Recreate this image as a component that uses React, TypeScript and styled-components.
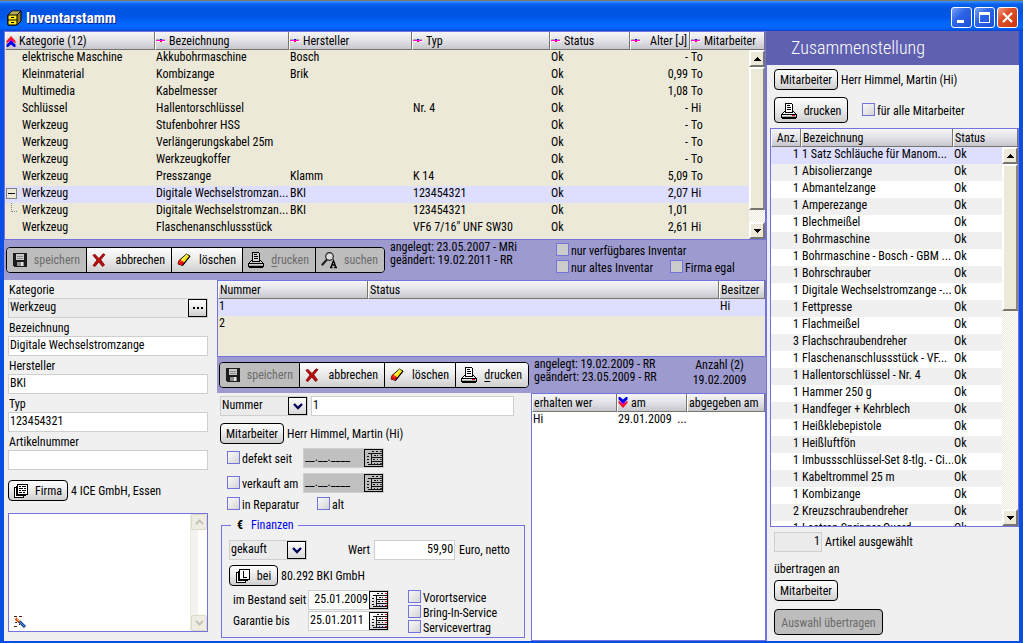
import React from 'react';
import styled, { createGlobalStyle, css } from 'styled-components';

const violet = '#7373e0';
const beige = '#ece9d8';
const selected = '#dedeff';
const bandColor = '#9c9ace';
const panel = '#f0f0f0';

const GlobalStyle = createGlobalStyle`
  *, *::before, *::after { box-sizing: border-box; }
  body { margin: 0; background: ${panel}; }
  body, button, input, select, textarea, table {
    font-family: "Roboto Condensed", "Liberation Sans", sans-serif;
    font-size: 12px;
    line-height: 16px;
    color: #000;
  }
`;

/* ---------- window ---------- */

const Window = styled.div`
  display: flex;
  flex-direction: column;
  min-height: 100vh;
  border-top: 1px solid #7d7a68;
  background: #0a4ee4;
`;

const TitleBar = styled.header`
  display: flex;
  align-items: center;
  gap: 4px;
  height: 30px;
  padding: 3px 5px 0 7px;
  background: linear-gradient(#3a95ff 0, #0a62ee 3px, #0054e0 8px, #0056e6 16px, #0066fd 22px, #0066ff 27px, #0347d0 30px);
`;

const Title = styled.h1`
  flex: 1;
  margin: 0;
  font-size: 15px;
  line-height: 20px;
  font-weight: 700;
  color: #fff;
  text-shadow: 1px 1px 0 #0a1e8a;
`;

const CaptionButtons = styled.div`
  display: flex;
  gap: 2px;
`;

const CaptionButton = styled.button<{ $close?: boolean }>`
  display: grid;
  place-items: center;
  width: 21px;
  height: 21px;
  padding: 0;
  border: 1px solid #fff;
  border-radius: 3px;
  background: ${p => (p.$close
    ? 'linear-gradient(135deg, #f0a088 0, #e0522c 35%, #c8350e 100%)'
    : 'linear-gradient(135deg, #7ca4f8 0, #2f66e8 40%, #1b4fd8 100%)')};
`;

const Content = styled.div`
  display: flex;
  flex: 1;
  margin: 0 4px 2px;
  background: ${panel};
`;

const MainColumn = styled.main`
  display: flex;
  flex: 1;
  flex-direction: column;
  min-width: 0;
`;

/* ---------- tables ---------- */

const TableFrame = styled.div<{ $fill?: string; $height?: number }>`
  position: relative;
  border: 1px solid ${violet};
  background: ${p => p.$fill || beige};
  ${p => p.$height && css`min-height: ${p.$height}px;`}
`;

const DataTable = styled.table`
  width: 100%;
  table-layout: fixed;
  border-spacing: 0;
`;

const Col = styled.col<{ $width?: number }>`
  ${p => p.$width && css`width: ${p.$width}px;`}
`;

const Th = styled.th<{ $right?: boolean; $icon?: boolean }>`
  height: 18px;
  padding: 1px 2px 0 ${p => (p.$icon ? 0 : 1)}px;
  overflow: hidden;
  border-right: 1px solid #77756c;
  border-bottom: 1px solid #77756c;
  border-left: 1px solid #fff;
  background: linear-gradient(#f6f6f8, #e2e2e6 50%, #c6c6ce);
  font-weight: 400;
  line-height: 16px;
  text-align: ${p => (p.$right ? 'right' : 'left')};
  white-space: nowrap;
`;

const HeadLabel = styled.span<{ $spread?: boolean }>`
  display: flex;
  align-items: center;
  justify-content: ${p => (p.$spread ? 'space-between' : 'flex-start')};
  gap: 3px;
`;

const Td = styled.td<{ $right?: boolean }>`
  height: 17px;
  padding: 0 ${p => (p.$right ? 2 : 0)}px 2px 1px;
  overflow: hidden;
  line-height: 15px;
  text-align: ${p => (p.$right ? 'right' : 'left')};
  white-space: nowrap;
`;

const TreeTd = styled(Td)`
  padding: 0;
`;

const TreeLine = styled.span`
  display: flex;
  align-items: flex-start;
  height: 17px;
`;

const TreeSlot = styled.span`
  display: block;
  width: 17px;
  height: 16px;
`;

const Tr = styled.tr<{ $fill?: string }>`
  background: ${p => p.$fill || 'transparent'};
`;

/* ---------- scroll bars ---------- */

const ScrollTrack = styled.div<{ $top: number }>`
  position: absolute;
  top: ${p => p.$top}px;
  right: 0;
  bottom: 0;
  display: flex;
  flex-direction: column;
  width: 16px;
  background: repeating-conic-gradient(#fff 0 25%, #ece9d8 0 50%) 0 0 / 2px 2px;
`;

const ScrollButton = styled.button`
  display: grid;
  place-items: center;
  flex: none;
  height: 17px;
  padding: 0;
  border: 2px solid;
  border-color: #fff #77756c #77756c #fff;
  background: ${beige};
`;

const ScrollThumb = styled.div<{ $height: string }>`
  flex: none;
  height: ${p => p.$height};
  border: 2px solid;
  border-color: #fff #8a877a #77756c #fff;
  background: ${beige};
`;

const Spacer = styled.div`
  flex: 1;
`;

/* ---------- controls ---------- */

const buttonFace = css`
  background: linear-gradient(#fdfdfd, #ececec 45%, #cfcfcf);
  &:disabled { background: #bdbdbd; color: #6c6c6c; }
`;

const PushButton = styled.button<{ $width: number; $tall?: boolean }>`
  display: inline-flex;
  align-items: center;
  justify-content: center;
  gap: 7px;
  flex: none;
  width: ${p => p.$width}px;
  height: ${p => (p.$tall ? 26 : 21)}px;
  padding: 1px 0 0;
  border: 1px solid #000;
  border-radius: 4px;
  white-space: nowrap;
  ${buttonFace}
`;

const ButtonBar = styled.div`
  display: flex;
  flex: none;
  height: 26px;
  border: 1px solid #000;
  border-radius: 4px;
  overflow: hidden;
`;

const BarButton = styled.button<{ $width: number }>`
  display: flex;
  align-items: center;
  justify-content: space-between;
  width: ${p => p.$width}px;
  padding: 0 6px 0 5px;
  border: 0;
  border-left: 1px solid #000;
  white-space: nowrap;
  ${buttonFace}
  &:first-child { padding-left: 6px; border-left: 0; }
`;

const Key = styled.u`
  text-underline-offset: 2px;
`;

const Band = styled.section<{ $height: number }>`
  display: flex;
  flex: none;
  gap: 5px;
  height: ${p => p.$height}px;
  background: ${bandColor};
`;

const BandBar = styled.div<{ $top: number }>`
  padding: ${p => p.$top}px 0 0 2px;
`;

const Stamp = styled.p<{ $width: number }>`
  width: ${p => p.$width}px;
  margin: 0;
  padding-top: 1px;
  line-height: 13px;
  white-space: nowrap;
`;

const Counter = styled.p`
  flex: 1;
  margin: 0;
  padding: 1px 0 0 8px;
  line-height: 15px;
  text-align: center;
`;

const FilterGroup = styled.div`
  display: grid;
  grid-template-columns: 114px auto;
  align-content: start;
  row-gap: 3px;
  padding-top: 3px;
`;

const WideCell = styled.div`
  grid-column: 1 / -1;
`;

const CheckLabel = styled.label`
  display: flex;
  align-items: flex-start;
  gap: 2px;
  height: 14px;
  white-space: nowrap;
`;

const CheckBox = styled.input<{ $flat?: boolean }>`
  flex: none;
  appearance: none;
  width: 13px;
  height: 13px;
  margin: 0;
  border: 1px solid ${violet};
  background: ${p => (p.$flat ? '#cbcbcb' : 'linear-gradient(135deg, #fafafa, #d4d4d4)')};
`;

const TextField = styled.input<{ $width?: number; $gray?: boolean; $right?: boolean }>`
  width: ${p => (p.$width ? `${p.$width}px` : '100%')};
  height: 20px;
  padding: 0 1px 2px;
  border: 1px solid #cfcfcf;
  border-radius: 0;
  outline: 0;
  background: ${p => (p.$gray ? '#ebebeb' : '#fff')};
  text-align: ${p => (p.$right ? 'right' : 'left')};
`;

const Joined = styled.div<{ $fill: string; $width?: number }>`
  display: flex;
  flex: none;
  width: ${p => (p.$width ? `${p.$width}px` : '100%')};
  height: 20px;
  border: 1px solid #cfcfcf;
  background: ${p => p.$fill};
`;

const JoinedInput = styled.input<{ $right?: boolean }>`
  flex: 1;
  min-width: 0;
  padding: 0 1px 2px;
  border: 0;
  outline: 0;
  background: transparent;
  text-align: ${p => (p.$right ? 'right' : 'left')};
`;

const JoinedButton = styled.button`
  display: grid;
  place-items: center;
  flex: none;
  width: 19px;
  height: 18px;
  padding: 0;
  border: 1px solid #000;
  ${buttonFace}
`;

const SelectBox = styled.div<{ $width: number }>`
  position: relative;
  flex: none;
  width: ${p => p.$width}px;
  height: 20px;
`;

const Select = styled.select`
  appearance: none;
  width: 100%;
  height: 20px;
  padding: 0 20px 2px 1px;
  border: 1px solid #cfcfcf;
  border-radius: 0;
  background: #ebebeb;
`;

const SelectArrow = styled.span`
  position: absolute;
  top: 1px;
  right: 1px;
  display: grid;
  place-items: center;
  width: 19px;
  height: 18px;
  border: 1px solid #000;
  background: linear-gradient(#fdfdfd, #d8d8d8);
  pointer-events: none;
`;

/* ---------- lower area ---------- */

const Lower = styled.div`
  display: flex;
  flex: 1;
`;

const ArticleForm = styled.form`
  display: flex;
  flex: none;
  flex-direction: column;
  width: 213px;
  padding: 0 9px 9px 4px;
`;

const FieldLabel = styled.label`
  height: 18px;
  padding-left: 1px;
  line-height: 20px;
`;

const Line = styled.div<{ $gap?: number; $top?: number; $left?: number }>`
  display: flex;
  align-items: center;
  gap: ${p => p.$gap ?? 3}px;
  margin-top: ${p => p.$top ?? 0}px;
  padding-left: ${p => p.$left ?? 0}px;
  white-space: nowrap;
`;

const NoteBox = styled.div`
  position: relative;
  display: flex;
  flex: 1;
  min-height: 118px;
  margin-top: 12px;
  border: 1px solid ${violet};
  background: #fff;
`;

const Note = styled.textarea`
  flex: 1;
  min-width: 0;
  padding: 2px;
  border: 0;
  outline: 0;
  resize: none;
  background: transparent;
`;

const NoteMark = styled.span`
  position: absolute;
  left: 5px;
  bottom: 3px;
  width: 12px;
  height: 12px;
`;

const PaleScroll = styled.div`
  display: flex;
  flex-direction: column;
  justify-content: space-between;
  width: 17px;
  border-left: 1px solid #ecebe4;
  background: linear-gradient(90deg, #f3f2ee 0 6px, #fff 8px);
`;

const PaleButton = styled.button`
  display: grid;
  place-items: center;
  height: 16px;
  padding: 0;
  border: 1px solid #dddac8;
  border-radius: 2px;
  background: #efede1;
`;

const ItemColumn = styled.div`
  display: flex;
  flex: 1;
  flex-direction: column;
  min-width: 0;
`;

const ItemDetails = styled.div`
  display: flex;
  flex: 1;
`;

const ItemForm = styled.form`
  flex: none;
  width: 314px;
  padding: 3px 6px 3px 3px;
`;

const CheckSlot = styled.div<{ $width: number }>`
  width: ${p => p.$width}px;
`;

const Finance = styled.fieldset`
  min-width: 0;
  margin: 6px 0 0 1px;
  padding: 7px 0 3px 7px;
  border: 1px solid ${violet};
`;

const Legend = styled.legend`
  margin-left: 2px;
  padding: 0 4px 0 6px;
  color: #0000f0;
`;

const Euro = styled.b`
  margin-right: 8px;
  color: #000;
`;

const ServiceGrid = styled.div`
  display: flex;
  align-items: flex-start;
  gap: 19px;
  margin-top: 4px;
`;

const DateList = styled.div`
  display: grid;
  grid-template-columns: 75px 81px;
  align-items: center;
  gap: 1px 0;
  padding-left: 4px;
  white-space: nowrap;
`;

const ServiceList = styled.div`
  display: flex;
  flex-direction: column;
  gap: 1px;
`;

const HistoryArea = styled.div`
  display: flex;
  flex: 1;
  min-width: 0;
`;

const HistoryFrame = styled(TableFrame)`
  flex: 1;
  min-width: 0;
`;

/* ---------- right panel ---------- */

const Side = styled.aside`
  display: flex;
  flex: none;
  flex-direction: column;
  width: 253px;
`;

const SideTitle = styled.h2`
  height: 34px;
  margin: 0;
  padding-left: 25px;
  background: #6060b0;
  color: #fff;
  font-size: 18px;
  font-weight: 300;
  line-height: 34px;
`;

const SideBody = styled.div`
  display: flex;
  flex: 1;
  flex-direction: column;
  padding: 4px 0 6px 3px;
  border-left: 1px solid ${violet};
`;

const SideRow = styled.div<{ $top?: number; $gap?: number }>`
  display: flex;
  align-items: center;
  gap: ${p => p.$gap ?? 3}px;
  margin-top: ${p => p.$top ?? 0}px;
  padding-left: 4px;
  white-space: nowrap;
`;

const ListFrame = styled(TableFrame)`
  flex: 1 1 0;
  margin-top: 5px;
  overflow: hidden;
`;

/* ---------- icons ---------- */

const CabinetIcon = () => (
  <svg width="15" height="16" viewBox="0 0 15 16" aria-hidden="true">
    <path d="M1 5 5 1h9v10l-4 4H1z" fill="#8a7d20" stroke="#000" />
    <path d="M5 1.500h8.500L10 5H1.500z" fill="#b9ad5a" />
    <path d="M1 5h9v10H1z" fill="#ffe81a" stroke="#000" />
    <path d="M1 10h9" stroke="#000" />
    <path d="M4 7.500h3M4 12.500h3" stroke="#000" />
    <path d="M10 5l4-4" stroke="#000" />
  </svg>
);

const SortNone = () => (
  <svg width="10" height="6" viewBox="0 0 10 6" shapeRendering="crispEdges" aria-hidden="true">
    <path d="M0 1h9v1H0z" fill="#b0a8b0" />
    <path d="M0 2h9v1H0z" fill="#ff00e0" />
    <path d="M1 3h9v1H1z" fill="#fff" />
    <path d="M4 1h2v1H4z" fill="#0018e0" />
    <path d="M4 3h2v1H4z" fill="#e80020" />
  </svg>
);

const SortDouble = ({ down }: { down?: boolean }) => (
  <svg width="10" height="12" viewBox="0 0 10 12" aria-hidden="true">
    <g transform={down ? 'rotate(180 5 6)' : undefined}>
      <path d="M5 1 9.500 6v2.500L5 5 .5 8.500V6z" fill="#f01818" />
      <path d="M5 4l3 3H2z" fill="#f000e0" />
      <path d="M5 5.500 9.500 9.500V12H8L5 9.500 2 12H.5V9.500z" fill="#0000e8" />
    </g>
  </svg>
);

const Floppy = () => (
  <svg width="14" height="14" viewBox="0 0 14 14" shapeRendering="crispEdges" aria-hidden="true">
    <path d="M0 0h13l1 1v13H1l-1-1z" fill="#1c1c1c" />
    <path d="M3 1h8v6H3z" fill="#c9c9c9" />
    <path d="M4 3h6v1H4zM4 5h6v1H4z" fill="#8c8c8c" />
    <path d="M4 9h7v4H4z" fill="#8e8e8e" />
    <path d="M8 9h2v4H8z" fill="#e4e4e4" />
  </svg>
);

const Cross = () => (
  <svg width="14" height="14" viewBox="0 0 14 14" aria-hidden="true">
    <path d="M2.500 1 7 5.500 11 .8l2 .8-4.200 5.200L12.500 12l-2 1.500L6.800 9 3 13.500l-2-1L5 7 1 2.500z" fill="#b80d0d" stroke="#7c0404" strokeWidth=".8" />
  </svg>
);

const Eraser = () => (
  <svg width="14" height="14" viewBox="0 0 14 14" aria-hidden="true">
    <path d="M9.500 1 13 3 5.500 12.500 1 11l1-3.500z" fill="#ffe600" stroke="#000" strokeWidth=".9" />
    <path d="M3.500 6 7.500 10 5.500 12.500 1 11l1-3.500z" fill="#e80c0c" />
    <path d="M10 1.500 4 8.500" stroke="#fffbb0" />
    <path d="M13 3 5.500 12.500" stroke="#000" strokeWidth="1.200" />
  </svg>
);

const Printer = ({ gray }: { gray?: boolean }) => (
  <svg width="16" height="16" viewBox="0 0 16 16" shapeRendering="crispEdges" aria-hidden="true">
    <path d="M4 0h7v1h1v8H4z" fill="#000" />
    <path d="M5 1h6v8H5z" fill={gray ? '#d0d0d0' : '#fff'} />
    <path d="M6 2h3v1H6zM6 4h4v1H6zM6 6h4v1H6z" fill="#000" />
    <path d="M3 8h1v1h8V8h1v1h1v1h1v1h1v4h-1v1H1v-1H0v-4h1v-1h1V9h1z" fill="#000" />
    <path d="M3 9h1v1h8V9h1v1h1v1H2v-1h1z" fill={gray ? '#c8c8c8' : '#fff'} />
    <path d="M1 12h14v1H1z" fill={gray ? '#d0d0d0' : '#efefef'} />
    <path d="M1 13h14v1H1z" fill="#a4a4a4" />
    {!gray && <path d="M11 12h3v1h-3z" fill="#f00000" />}
  </svg>
);

const SearchIcon = () => (
  <svg width="16" height="17" viewBox="0 0 16 17" aria-hidden="true">
    <circle cx="8.500" cy="4.500" r="3.800" fill="#dcdcdc" stroke="#222" strokeWidth="1.200" />
    <path d="M6 7.500.8 13.200" stroke="#222" strokeWidth="2.200" />
    <path d="M9 15.500h2.500M13 15.500h3M9.800 15.500 12.500 8.500 15 15.500M10.800 13h3.500" fill="none" stroke="#000" strokeWidth="1.300" />
  </svg>
);

const Calendar = ({ color }: { color?: boolean }) => (
  <svg width="17" height="16" viewBox="0 0 17 16" shapeRendering="crispEdges" aria-hidden="true">
    <path d="M3 3h14v1H3zM6 7h11v1H6zM6 11h11v1H6zM3 14h14v1H3zM6 3h1v12H6zM2 6h2v1H2zM2 9h2v1H2zM2 12h2v1H2z" fill="#111" />
    <path d="M7 1h2v1H7zM11 1h2v1h-2zM9 5h2v1H9zM12 5h1v1h-1zM8 9h2v1H8zM12 9h1v1h-1z" fill="#111" />
    <path d="M15 1h2v1h-2zM15 5h2v1h-2zM15 9h2v1h-2zM15 13h2v1h-2z" fill={color ? '#e00010' : '#333'} />
    <path d="M9 13h1v1H9zM12 13h1v1h-1z" fill={color ? '#1020d0' : '#333'} />
  </svg>
);

const Sheets = ({ letter }: { letter?: boolean }) => (
  <svg width="14" height="14" viewBox="0 0 14 14" shapeRendering="crispEdges" aria-hidden="true">
    <path d="M0 3h10v11H0z" fill="#000" />
    <path d="M1 4h8v9H1z" fill="#fff" />
    <path d="M2 2h10v10H2z" fill="#000" />
    <path d="M3 3h8v8H3z" fill="#fff" />
    <path d="M3 0h11v11H3z" fill="#000" />
    <path d="M4 1h9v9H4z" fill="#fff" />
    {letter
      ? <path d="M7 2h1v6h3v1H7z" fill="#000" />
      : <path d="M5 2h2v1H5zM8 2h4v1H8zM5 4h4v1H5zM10 4h2v1h-2zM5 6h2v1H5zM8 6h4v1H8zM5 8h3v1H5zM9 8h2v1H9z" fill="#000" />}
  </svg>
);

const Chevron = () => (
  <svg width="10" height="8" viewBox="0 0 10 8" aria-hidden="true">
    <path d="M1 2l4 4 4-4" fill="none" stroke="#000058" strokeWidth="2.400" />
  </svg>
);

const Dots = () => (
  <svg width="12" height="2" viewBox="0 0 12 2" shapeRendering="crispEdges" aria-hidden="true">
    <path d="M1 0h2v2H1zM5 0h2v2H5zM9 0h2v2H9z" fill="#000" />
  </svg>
);

const Arrow = ({ down }: { down?: boolean }) => (
  <svg width="7" height="4" viewBox="0 0 7 4" shapeRendering="crispEdges" aria-hidden="true">
    <path d={down ? 'M0 0h7v1H6v1H5v1H4v1H3V3H2V2H1V1H0z' : 'M3 0h1v1h1v1h1v1h1v1H0V3h1V2h1V1h1z'} fill="#000" />
  </svg>
);

const PaleArrow = ({ down }: { down?: boolean }) => (
  <svg width="9" height="6" viewBox="0 0 9 6" aria-hidden="true">
    <path d={down ? 'M1 1l3.500 3.500L8 1' : 'M1 5l3.500-3.500L8 5'} fill="none" stroke="#c4c2b8" strokeWidth="2" />
  </svg>
);

const Minus = () => (
  <svg width="17" height="16" viewBox="0 0 17 16" shapeRendering="crispEdges" aria-hidden="true">
    <path d="M1 2h11v11H1z" fill="#808080" />
    <path d="M2 3h9v9H2z" fill={beige} />
    <path d="M3 7h7v1H3z" fill="#000" />
  </svg>
);

const Branch = () => (
  <svg width="17" height="16" viewBox="0 0 17 16" shapeRendering="crispEdges" aria-hidden="true">
    <path d="M6.500 0v9M7 8.500h6" fill="none" stroke="#808080" strokeDasharray="1 1" />
  </svg>
);

const Pencil = () => (
  <svg width="12" height="12" viewBox="0 0 12 12" aria-hidden="true">
    <path d="M0 .5h3M5 .5h3M0 10.500h3M5 8.500h1M1 6.500h2" stroke="#402010" />
    <path d="M1.500 2.500 6 6.500" stroke="#e0501c" strokeWidth="2.600" />
    <path d="M3 3l3 3" stroke="#f8d030" />
    <path d="M5.500 5.500 11 11" stroke="#143c98" strokeWidth="3" />
    <path d="M6 6l4.500 4.500" stroke="#38b0d8" />
  </svg>
);

/* ---------- composite controls ---------- */

const ScrollBar = ({ top, thumb }: { top: number; thumb: string }) => (
  <ScrollTrack $top={top}>
    <ScrollButton type="button" aria-label="nach oben"><Arrow /></ScrollButton>
    <ScrollThumb $height={thumb} />
    <Spacer />
    <ScrollButton type="button" aria-label="nach unten"><Arrow down /></ScrollButton>
  </ScrollTrack>
);

const Check = ({ label, flat }: { label: string; flat?: boolean }) => (
  <CheckLabel><CheckBox type="checkbox" $flat={flat} />{label}</CheckLabel>
);

const DateField = ({ id, label, value, gray, right }: { id: string; label?: string; value: string; gray?: boolean; right?: boolean }) => (
  <Joined $fill={gray ? '#c0c0c0' : '#fff'} $width={81}>
    <JoinedInput id={id} aria-label={label} defaultValue={value} $right={right} />
    <JoinedButton type="button" aria-label="Kalender" disabled={gray}><Calendar color={!gray} /></JoinedButton>
  </Joined>
);

const DropDown = ({ label, value, width }: { label: string; value: string; width: number }) => (
  <SelectBox $width={width}>
    <Select aria-label={label}><option>{value}</option></Select>
    <SelectArrow><Chevron /></SelectArrow>
  </SelectBox>
);

/* ---------- data ---------- */

const inventory = [
  ['elektrische Maschine', 'Akkubohrmaschine', 'Bosch', '', 'Ok', '-', 'To'],
  ['Kleinmaterial', 'Kombizange', 'Brik', '', 'Ok', '0,99', 'To'],
  ['Multimedia', 'Kabelmesser', '', '', 'Ok', '1,08', 'To'],
  ['Schlüssel', 'Hallentorschlüssel', '', 'Nr. 4', 'Ok', '-', 'Hi'],
  ['Werkzeug', 'Stufenbohrer HSS', '', '', 'Ok', '-', 'To'],
  ['Werkzeug', 'Verlängerungskabel 25m', '', '', 'Ok', '-', 'To'],
  ['Werkzeug', 'Werkzeugkoffer', '', '', 'Ok', '-', 'To'],
  ['Werkzeug', 'Presszange', 'Klamm', 'K 14', 'Ok', '5,09', 'To'],
  ['Werkzeug', 'Digitale Wechselstromzan...', 'BKI', '123454321', 'Ok', '2,07', 'Hi'],
  ['Werkzeug', 'Digitale Wechselstromzan...', 'BKI', '123454321', 'Ok', '1,01', ''],
  ['Werkzeug', 'Flaschenanschlussstück', '', 'VF6 7/16" UNF SW30', 'Ok', '2,61', 'Hi'],
];

const articles: [number, string][] = [
  [1, '1 Satz Schläuche für Manom...'],
  [1, 'Abisolierzange'],
  [1, 'Abmantelzange'],
  [1, 'Amperezange'],
  [1, 'Blechmeißel'],
  [1, 'Bohrmaschine'],
  [1, 'Bohrmaschine - Bosch - GBM ...'],
  [1, 'Bohrschrauber'],
  [1, 'Digitale Wechselstromzange -...'],
  [1, 'Fettpresse'],
  [1, 'Flachmeißel'],
  [3, 'Flachschraubendreher'],
  [1, 'Flaschenanschlussstück - VF...'],
  [1, 'Hallentorschlüssel - Nr. 4'],
  [1, 'Hammer 250 g'],
  [1, 'Handfeger + Kehrblech'],
  [1, 'Heißklebepistole'],
  [1, 'Heißluftfön'],
  [1, 'Imbussschlüssel-Set 8-tlg. - Ci...'],
  [1, 'Kabeltrommel 25 m'],
  [1, 'Kombizange'],
  [2, 'Kreuzschraubendreher'],
  [1, 'Leatron Springer Quard'],
];

const textFields = [
  { id: 'bezeichnung', label: 'Bezeichnung', value: 'Digitale Wechselstromzange' },
  { id: 'hersteller', label: 'Hersteller', value: 'BKI' },
  { id: 'typ', label: 'Typ', value: '123454321' },
  { id: 'artikelnummer', label: 'Artikelnummer', value: '' },
];

const InventoryTable = () => (
  <TableFrame $height={209}>
    <DataTable>
      <colgroup>
        <Col $width={150} /><Col $width={134} /><Col $width={123} /><Col />
        <Col $width={80} /><Col $width={60} /><Col $width={75} />
      </colgroup>
      <thead>
        <tr>
          <Th $icon><HeadLabel><SortDouble />Kategorie (12)</HeadLabel></Th>
          <Th $icon><HeadLabel><SortNone />Bezeichnung</HeadLabel></Th>
          <Th $icon><HeadLabel><SortNone />Hersteller</HeadLabel></Th>
          <Th $icon><HeadLabel><SortNone />Typ</HeadLabel></Th>
          <Th $icon><HeadLabel><SortNone />Status</HeadLabel></Th>
          <Th $icon><HeadLabel $spread><SortNone />Alter [J]</HeadLabel></Th>
          <Th $icon><HeadLabel><SortNone />Mitarbeiter</HeadLabel></Th>
        </tr>
      </thead>
      <tbody>
        {inventory.map(([category, ...cells], row) => (
          <Tr key={row} $fill={row === 8 ? selected : undefined}>
            <TreeTd>
              <TreeLine>
                <TreeSlot>{row === 8 ? <Minus /> : row === 9 ? <Branch /> : null}</TreeSlot>
                {category}
              </TreeLine>
            </TreeTd>
            {cells.map((cell, i) => <Td key={i} $right={i === 4}>{cell}</Td>)}
          </Tr>
        ))}
      </tbody>
    </DataTable>
    <ScrollBar top={18} thumb="143px" />
  </TableFrame>
);

const ArticlePane = () => (
  <ArticleForm>
    <FieldLabel htmlFor="kategorie">Kategorie</FieldLabel>
    <Joined $fill="#ebebeb">
      <JoinedInput id="kategorie" defaultValue="Werkzeug" />
      <JoinedButton type="button" aria-label="Kategorie wählen"><Dots /></JoinedButton>
    </Joined>
    {textFields.map(f => (
      <React.Fragment key={f.id}>
        <FieldLabel htmlFor={f.id}>{f.label}</FieldLabel>
        <TextField id={f.id} defaultValue={f.value} />
      </React.Fragment>
    ))}
    <Line $top={10}>
      <PushButton type="button" $width={60}><Sheets />Firma</PushButton>
      4 ICE GmbH, Essen
    </Line>
    <NoteBox>
      <Note aria-label="Notiz" />
      <NoteMark><Pencil /></NoteMark>
      <PaleScroll>
        <PaleButton type="button" aria-label="nach oben"><PaleArrow /></PaleButton>
        <PaleButton type="button" aria-label="nach unten"><PaleArrow down /></PaleButton>
      </PaleScroll>
    </NoteBox>
  </ArticleForm>
);

const ItemPane = () => (
  <ItemForm>
    <Line>
      <DropDown label="Art der Nummer" value="Nummer" width={88} />
      <TextField aria-label="Nummer" defaultValue="1" $width={203} />
    </Line>
    <Line $top={7}>
      <PushButton type="button" $width={64}>Mitarbeiter</PushButton>
      Herr Himmel, Martin (Hi)
    </Line>
    <Line $top={4} $left={7} $gap={0}>
      <CheckSlot $width={76}><Check label="defekt seit" /></CheckSlot>
      <DateField id="defekt" label="defekt seit" value="__.__.____" gray />
    </Line>
    <Line $top={5} $left={7} $gap={0}>
      <CheckSlot $width={76}><Check label="verkauft am" /></CheckSlot>
      <DateField id="verkauft" label="verkauft am" value="__.__.____" gray />
    </Line>
    <Line $top={4} $left={7} $gap={0}>
      <CheckSlot $width={90}><Check label="in Reparatur" /></CheckSlot>
      <Check label="alt" />
    </Line>
    <Finance>
      <Legend><Euro>€</Euro>Finanzen</Legend>
      <Line>
        <DropDown label="Erwerbsart" value="gekauft" width={78} />
        <Line as="label" $left={38} $gap={4}>
          Wert
          <TextField defaultValue="59,90" $width={81} $right />
          Euro, netto
        </Line>
      </Line>
      <Line $top={5}>
        <PushButton type="button" $width={49}><Sheets letter />bei</PushButton>
        80.292 BKI GmbH
      </Line>
      <ServiceGrid>
        <DateList>
          <label htmlFor="bestand">im Bestand seit</label>
          <DateField id="bestand" value="25.01.2009" right />
          <label htmlFor="garantie">Garantie bis</label>
          <DateField id="garantie" value="25.01.2011" />
        </DateList>
        <ServiceList>
          <Check label="Vorortservice" />
          <Check label="Bring-In-Service" />
          <Check label="Servicevertrag" />
        </ServiceList>
      </ServiceGrid>
    </Finance>
  </ItemForm>
);

const SidePane = () => (
  <Side>
    <SideTitle>Zusammenstellung</SideTitle>
    <SideBody>
      <SideRow>
        <PushButton type="button" $width={64}>Mitarbeiter</PushButton>
        Herr Himmel, Martin (Hi)
      </SideRow>
      <SideRow $top={7} $gap={14}>
        <PushButton type="button" $tall $width={74}><Printer />drucken</PushButton>
        <Check label="für alle Mitarbeiter" />
      </SideRow>
      <ListFrame $fill="#fff">
        <DataTable>
          <colgroup><Col $width={30} /><Col $width={152} /><Col /></colgroup>
          <thead>
            <tr><Th $right>Anz.</Th><Th>Bezeichnung</Th><Th>Status</Th></tr>
          </thead>
          <tbody>
            {articles.map(([count, name], row) => (
              <Tr key={row} $fill={row === 0 ? selected : row % 2 ? panel : '#fff'}>
                <Td $right>{count}</Td><Td>{name}</Td><Td>Ok</Td>
              </Tr>
            ))}
          </tbody>
        </DataTable>
        <ScrollBar top={18} thumb="147px" />
      </ListFrame>
      <SideRow as="label" $top={5}>
        <TextField $width={48} $gray $right defaultValue="1" />
        Artikel ausgewählt
      </SideRow>
      <SideRow $top={9}>übertragen an</SideRow>
      <SideRow $top={3}><PushButton type="button" $width={64}>Mitarbeiter</PushButton></SideRow>
      <SideRow $top={8}><PushButton type="button" disabled $tall $width={109}>Auswahl übertragen</PushButton></SideRow>
    </SideBody>
  </Side>
);

export default function App() {
  return (
    <>
      <GlobalStyle />
      <Window>
        <TitleBar>
          <CabinetIcon />
          <Title>Inventarstamm</Title>
          <CaptionButtons>
            <CaptionButton type="button" aria-label="Minimieren">
              <svg width="13" height="13" aria-hidden="true"><path d="M2 9h7v3H2z" fill="#fff" /></svg>
            </CaptionButton>
            <CaptionButton type="button" aria-label="Maximieren">
              <svg width="13" height="13" shapeRendering="crispEdges" aria-hidden="true"><path d="M1 1h11v11H1zM2 4v7h9V4z" fill="#fff" fillRule="evenodd" /></svg>
            </CaptionButton>
            <CaptionButton type="button" aria-label="Schließen" $close>
              <svg width="13" height="13" aria-hidden="true"><path d="M2 2l9 9M11 2l-9 9" stroke="#fff" strokeWidth="2.200" /></svg>
            </CaptionButton>
          </CaptionButtons>
        </TitleBar>
        <Content>
          <MainColumn>
            <InventoryTable />
            <Band $height={40}>
              <BandBar $top={7}>
                <ButtonBar>
                  <BarButton type="button" $width={79} disabled><Floppy />speichern</BarButton>
                  <BarButton type="button" $width={85}><Cross />abbrechen</BarButton>
                  <BarButton type="button" $width={71}><Eraser />löschen</BarButton>
                  <BarButton type="button" $width={73} disabled><Printer gray /><span><Key>d</Key>rucken</span></BarButton>
                  <BarButton type="button" $width={69} disabled><SearchIcon />suchen</BarButton>
                </ButtonBar>
              </BandBar>
              <Stamp $width={161}>angelegt: 23.05.2007 - MRi<br />geändert: 19.02.2011 - RR</Stamp>
              <FilterGroup>
                <WideCell><Check flat label="nur verfügbares Inventar" /></WideCell>
                <Check flat label="nur altes Inventar" />
                <Check flat label="Firma egal" />
              </FilterGroup>
            </Band>
            <Lower>
              <ArticlePane />
              <ItemColumn>
                <TableFrame $height={77}>
                  <DataTable>
                    <colgroup><Col $width={150} /><Col /><Col $width={46} /></colgroup>
                    <thead>
                      <tr><Th>Nummer</Th><Th>Status</Th><Th>Besitzer</Th></tr>
                    </thead>
                    <tbody>
                      <Tr $fill={selected}><Td>1</Td><Td /><Td>Hi</Td></Tr>
                      <Tr><Td>2</Td><Td /><Td /></Tr>
                    </tbody>
                  </DataTable>
                </TableFrame>
                <Band $height={36}>
                  <BandBar $top={5}>
                    <ButtonBar>
                      <BarButton type="button" $width={79} disabled><Floppy />speichern</BarButton>
                      <BarButton type="button" $width={85}><Cross />abbrechen</BarButton>
                      <BarButton type="button" $width={71}><Eraser />löschen</BarButton>
                      <BarButton type="button" $width={73}><Printer /><span><Key>d</Key>rucken</span></BarButton>
                    </ButtonBar>
                  </BandBar>
                  <Stamp $width={126}>angelegt: 19.02.2009 - RR<br />geändert: 23.05.2009 - RR</Stamp>
                  <Counter>Anzahl (2)<br />19.02.2009</Counter>
                </Band>
                <ItemDetails>
                  <ItemPane />
                  <HistoryArea>
                    <HistoryFrame $fill="#fff">
                      <DataTable>
                        <colgroup><Col $width={85} /><Col $width={70} /><Col /></colgroup>
                        <thead>
                          <tr><Th>erhalten wer</Th><Th $icon><HeadLabel><SortDouble down />am</HeadLabel></Th><Th>abgegeben am</Th></tr>
                        </thead>
                        <tbody>
                          <Tr><Td>Hi</Td><Td>29.01.2009 &nbsp;...</Td><Td /></Tr>
                        </tbody>
                      </DataTable>
                    </HistoryFrame>
                  </HistoryArea>
                </ItemDetails>
              </ItemColumn>
            </Lower>
          </MainColumn>
          <SidePane />
        </Content>
      </Window>
    </>
  );
}
